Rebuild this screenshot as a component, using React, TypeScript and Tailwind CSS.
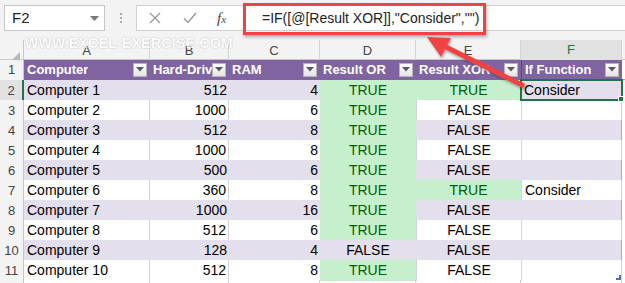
import React from "react";

const rows = [
  { name: "Computer 1", hd: 512, ram: 4, or: true, xor: true, fn: "Consider" },
  { name: "Computer 2", hd: 1000, ram: 6, or: true, xor: false, fn: "" },
  { name: "Computer 3", hd: 512, ram: 8, or: true, xor: false, fn: "" },
  { name: "Computer 4", hd: 1000, ram: 8, or: true, xor: false, fn: "" },
  { name: "Computer 5", hd: 500, ram: 6, or: true, xor: false, fn: "" },
  { name: "Computer 6", hd: 360, ram: 8, or: true, xor: true, fn: "Consider" },
  { name: "Computer 7", hd: 1000, ram: 16, or: true, xor: false, fn: "" },
  { name: "Computer 8", hd: 512, ram: 6, or: true, xor: false, fn: "" },
  { name: "Computer 9", hd: 128, ram: 4, or: false, xor: false, fn: "" },
  { name: "Computer 10", hd: 512, ram: 8, or: true, xor: false, fn: "" },
];

const gridCols = "grid grid-cols-[24px_126px_79px_91px_96px_105px_101px_1fr]";

function FilterButton() {
  return (
    <div className="w-[14px] h-[14px] shrink-0 mr-[3px] border border-[#b5b5b5] bg-gradient-to-b from-white to-[#e4e4e4] flex items-center justify-center">
      <svg width="8" height="5" viewBox="0 0 8 5">
        <path d="M0 0 L8 0 L4 4.5 Z" fill="#595959" />
      </svg>
    </div>
  );
}

function HeaderCell({ label, last }: { label: string; last?: boolean }) {
  return (
    <div className={`h-full bg-[#8064a2] flex items-center justify-between overflow-hidden pl-[3px] ${last ? "border-l border-[#217346]" : ""}`}>
      <span className="text-white font-bold text-[13px] whitespace-nowrap overflow-hidden">{label}</span>
      <FilterButton />
    </div>
  );
}

export default function App() {
  return (
    <div className="relative w-[625px] h-[283px] overflow-hidden bg-white font-['Liberation_Sans',Arial,sans-serif] text-black select-none">
      {/* formula bar */}
      <div className="h-[40px] bg-[#f3f3f3] flex items-start pt-[5px]">
        <div className="ml-[4px] w-[101px] h-[26px] bg-white border border-[#c6c6c6] flex items-center justify-between pl-[7px] pr-[5px]">
          <span className="text-[15px] text-[#222]">F2</span>
          <svg width="9" height="5" viewBox="0 0 9 5">
            <path d="M0 0 L9 0 L4.5 5 Z" fill="#777" />
          </svg>
        </div>
        <div className="w-[31px] h-[26px] flex flex-col items-center justify-center gap-[2px]">
          <span className="w-[2px] h-[2px] bg-[#aaa]" />
          <span className="w-[2px] h-[2px] bg-[#aaa]" />
          <span className="w-[2px] h-[2px] bg-[#aaa]" />
        </div>
        <div className="flex-1 h-[26px] bg-white border border-r-0 border-[#d0d0d0] flex items-center">
          <div className="w-[108px] flex items-center h-full">
            <svg className="ml-[12px]" width="12" height="12" viewBox="0 0 12 12">
              <path d="M1 1 L11 11 M11 1 L1 11" stroke="#9a9a9a" strokeWidth="1.3" />
            </svg>
            <svg className="ml-[22px]" width="14" height="12" viewBox="0 0 14 12">
              <path d="M1 6.5 L5 10.5 L13 1" stroke="#9a9a9a" strokeWidth="1.5" fill="none" />
            </svg>
            <span className="ml-[20px] font-['Liberation_Serif',serif] italic text-[15px] text-[#444]">
              f<span className="text-[11px]">x</span>
            </span>
          </div>
          <span className="ml-[17px] text-[14px] text-[#222] whitespace-nowrap">=IF([@[Result XOR]],"Consider","")</span>
        </div>
      </div>

      {/* column headers */}
      <div className={`${gridCols} h-[20px] bg-[#f3f3f3] border-b border-[#c6c6c6] text-[13px] text-[#444]`}>
        <div className="relative border-r border-[#c6c6c6]">
          <svg className="absolute right-[3px] bottom-[3px]" width="8" height="8" viewBox="0 0 8 8">
            <path d="M8 0 L8 8 L0 8 Z" fill="#b8b8b8" />
          </svg>
        </div>
        {["A", "B", "C", "D", "E"].map((c) => (
          <div key={c} className="flex items-end justify-center pb-[2px] border-r border-[#d5d5d5]">{c}</div>
        ))}
        <div className="flex items-end justify-center pb-[1px] bg-[#e1e1e1] border-r border-[#d5d5d5] border-b-2 border-b-[#217346] text-[#217346]">F</div>
        <div />
      </div>

      {/* table header row */}
      <div className={`${gridCols} h-[20px] border-b border-[#b1a0c7]`}>
        <div className="flex items-center justify-center bg-[#f3f3f3] border-r border-[#c6c6c6] text-[13px] text-[#444]">1</div>
        <HeaderCell label="Computer" />
        <HeaderCell label="Hard-Drive" />
        <HeaderCell label="RAM" />
        <HeaderCell label="Result OR" />
        <HeaderCell label="Result XOR" />
        <HeaderCell label="If Function" last />
        <div />
      </div>

      {/* data rows */}
      {rows.map((r, i) => {
        const banded = i % 2 === 0;
        const bg = banded ? "bg-[#e4dfec]" : "bg-white";
        const grid = banded ? "" : "border-r border-[#d4d4d4]";
        const selected = i === 0;
        return (
          <div key={r.name} className={`${gridCols} h-[20px] border-b border-[#b1a0c7] text-[14px]`}>
            <div
              className={`flex items-center justify-center text-[13px] text-[#444] ${
                selected ? "bg-[#e1e1e1] border-r-2 border-[#217346]" : "bg-[#f3f3f3] border-r border-[#c6c6c6]"
              }`}
            >
              {i + 2}
            </div>
            <div className={`${bg} ${grid} flex items-center pl-[3px] whitespace-nowrap`}>{r.name}</div>
            <div className={`${bg} ${grid} flex items-center justify-end pr-[2px]`}>{r.hd}</div>
            <div className={`${bg} flex items-center justify-end pr-[2px]`}>{r.ram}</div>
            <div className={`${r.or ? "bg-[#c6efce] text-[#006100]" : bg} flex items-center justify-center`}>
              {r.or ? "TRUE" : "FALSE"}
            </div>
            <div className={`${r.xor ? "bg-[#c6efce] text-[#006100]" : bg} ${r.xor || banded ? "" : "border-l border-[#d4d4d4]"} flex items-center justify-center`}>
              {r.xor ? "TRUE" : "FALSE"}
            </div>
            <div className={`${bg} ${banded ? "" : "border-l border-[#d4d4d4]"} border-r border-[#b1a0c7] flex items-center pl-[3px]`}>{r.fn}</div>
            <div className="bg-white" />
          </div>
        );
      })}
      <div className={`${gridCols} h-[4px]`}>
        <div className="bg-[#f3f3f3] border-r border-[#c6c6c6]" />
        <div className="border-r border-[#d4d4d4]" />
        <div className="border-r border-[#d4d4d4]" />
        <div className="border-r border-[#d4d4d4]" />
        <div className="border-r border-[#d4d4d4]" />
        <div className="border-r border-[#d4d4d4]" />
        <div className="border-r border-[#d4d4d4]" />
        <div />
      </div>

      {/* watermark */}
      <div className="absolute left-[25px] top-[36px] leading-none text-[14px] font-bold tracking-[0.3px] text-white [text-shadow:0_0_1.5px_rgba(0,0,0,0.4)] opacity-75">
        WWW.EXCEL-EXERCISE.COM
      </div>

      {/* active cell F2 */}
      <div className="absolute left-[520px] top-[79px] w-[103px] h-[22px] border-2 border-[#217346]" />
      <div className="absolute left-[618px] top-[96px] w-[6px] h-[6px] bg-[#217346] border border-white" />

      {/* table resize handle */}
      <svg className="absolute left-[616px] top-[275px]" width="5" height="5" viewBox="0 0 5 5">
        <path d="M5 0 L5 5 L0 5 L0 3 L3 3 L3 0 Z" fill="#4a6fb5" />
      </svg>

      {/* callout box */}
      <div className="absolute left-[243px] top-[3px] w-[243px] h-[32px] border-[3px] border-[#ef4343] shadow-[1px_2px_3px_rgba(0,0,0,0.3)]" />

      {/* arrow */}
      <svg className="absolute left-0 top-0 pointer-events-none" width="625" height="283" viewBox="0 0 625 283">
        <defs>
          <filter id="sh" x="-10%" y="-10%" width="130%" height="130%">
            <feDropShadow dx="1" dy="2" stdDeviation="1.2" floodColor="#000" floodOpacity="0.3" />
          </filter>
        </defs>
        <g filter="url(#sh)">
          <line x1="446" y1="47" x2="524" y2="86" stroke="#ef4343" strokeWidth="5" />
          <path d="M427 37 L451 38 L441 57 Z" fill="#ef4343" />
        </g>
      </svg>
    </div>
  );
}
